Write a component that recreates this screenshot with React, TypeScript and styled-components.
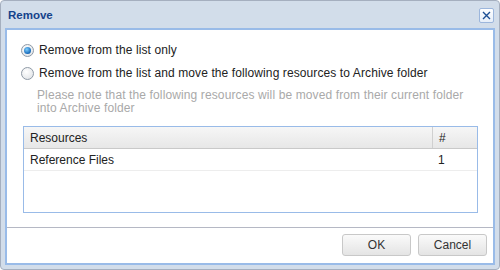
import React, { useState } from "react";
import styled, { createGlobalStyle } from "styled-components";

const Global = createGlobalStyle`
  html, body {
    margin: 0;
    padding: 0;
    background: #ffffff;
  }
  * { box-sizing: border-box; }
`;

const Window = styled.div`
  width: 500px;
  height: 270px;
  display: flex;
  flex-direction: column;
  background: #d2ddea;
  border: 1px solid #a5afbf;
  border-radius: 4px;
  padding: 0 4px 4px 4px;
  font-family: "Liberation Sans", Arial, sans-serif;
  font-size: 12px;
  color: #222;
`;

const Header = styled.div`
  height: 27px;
  display: flex;
  align-items: center;
  justify-content: space-between;
  padding: 0 1px 0 3px;
`;

const Title = styled.div`
  font-weight: bold;
  font-size: 11.5px;
  color: #15428b;
  padding-top: 1px;
`;

const CloseButton = styled.div`
  width: 15px;
  height: 15px;
  border: 1px solid #9cb6dc;
  border-radius: 2px;
  background: linear-gradient(#ffffff, #e6eef9);
  display: flex;
  align-items: center;
  justify-content: center;
  margin-top: 1px;
`;

const Body = styled.div`
  flex: 1;
  display: flex;
  flex-direction: column;
  background: #ffffff;
  border: 2px solid #99bbe8;
`;

const Content = styled.div`
  flex: 1;
  padding: 11px 15px 0 14px;
`;

const Option = styled.label`
  display: flex;
  align-items: center;
  height: 18px;
  margin-bottom: 5px;
  letter-spacing: 0.1px;
  cursor: default;
`;

const Radio = styled.span<{ $checked: boolean }>`
  width: 13px;
  height: 13px;
  border-radius: 50%;
  border: 1px solid #8f9aa6;
  background: radial-gradient(circle at 40% 35%, #ffffff, #dcdfe3);
  margin-right: 5px;
  display: flex;
  align-items: center;
  justify-content: center;
  flex: none;

  &::after {
    content: "";
    display: ${(p) => (p.$checked ? "block" : "none")};
    width: 7px;
    height: 7px;
    border-radius: 50%;
    background: radial-gradient(circle at 40% 35%, #7fd0ff, #1668b8 70%, #0d4d8c);
  }
`;

const Note = styled.div`
  color: #a9a9a9;
  line-height: 13px;
  letter-spacing: 0.12px;
  margin: 7px 0 0 16px;
`;

const Table = styled.div`
  margin: 11px 0 0 2px;
  height: 87px;
  border: 1px solid #99bbe8;
  display: flex;
  flex-direction: column;
`;

const Row = styled.div<{ $head?: boolean }>`
  display: grid;
  grid-template-columns: 1fr 45px;
  height: 22px;
  align-items: center;
  background: ${(p) => (p.$head ? "linear-gradient(#f6f6f6, #e7e7e7)" : "#ffffff")};
  border-bottom: 1px solid ${(p) => (p.$head ? "#c9c9c9" : "#ededed")};
`;

const Cell = styled.div<{ $divider?: boolean }>`
  height: 100%;
  display: flex;
  align-items: center;
  padding-left: 6px;
  border-left: ${(p) => (p.$divider ? "1px solid #d0d0d0" : "none")};
`;

const Footer = styled.div`
  border-top: 1px solid #b5b8c4;
  display: flex;
  justify-content: flex-end;
  gap: 7px;
  padding: 6px 6px 7px 0;
`;

const Button = styled.button`
  width: 69px;
  height: 22px;
  border: 1px solid #c8c8c8;
  border-radius: 3px;
  background: linear-gradient(#fafafa, #e4e4e4);
  font-family: "Liberation Sans", Arial, sans-serif;
  font-size: 12px;
  color: #333;
  padding: 0;
`;

export default function App() {
  const [choice, setChoice] = useState(0);

  return (
    <>
      <Global />
      <Window>
        <Header>
          <Title>Remove</Title>
          <CloseButton>
            <svg width="9" height="9" viewBox="0 0 9 9">
              <path d="M1 1 L8 8 M8 1 L1 8" stroke="#1d4f94" strokeWidth="1.4" />
            </svg>
          </CloseButton>
        </Header>
        <Body>
          <Content>
            <Option onClick={() => setChoice(0)}>
              <Radio $checked={choice === 0} />
              Remove from the list only
            </Option>
            <Option onClick={() => setChoice(1)}>
              <Radio $checked={choice === 1} />
              Remove from the list and move the following resources to Archive folder
            </Option>
            <Note>
              Please note that the following resources will be moved from their current folder
              <br />
              into Archive folder
            </Note>
            <Table>
              <Row $head>
                <Cell>Resources</Cell>
                <Cell $divider>#</Cell>
              </Row>
              <Row>
                <Cell>Reference Files</Cell>
                <Cell>1</Cell>
              </Row>
            </Table>
          </Content>
          <Footer>
            <Button>OK</Button>
            <Button>Cancel</Button>
          </Footer>
        </Body>
      </Window>
    </>
  );
}
